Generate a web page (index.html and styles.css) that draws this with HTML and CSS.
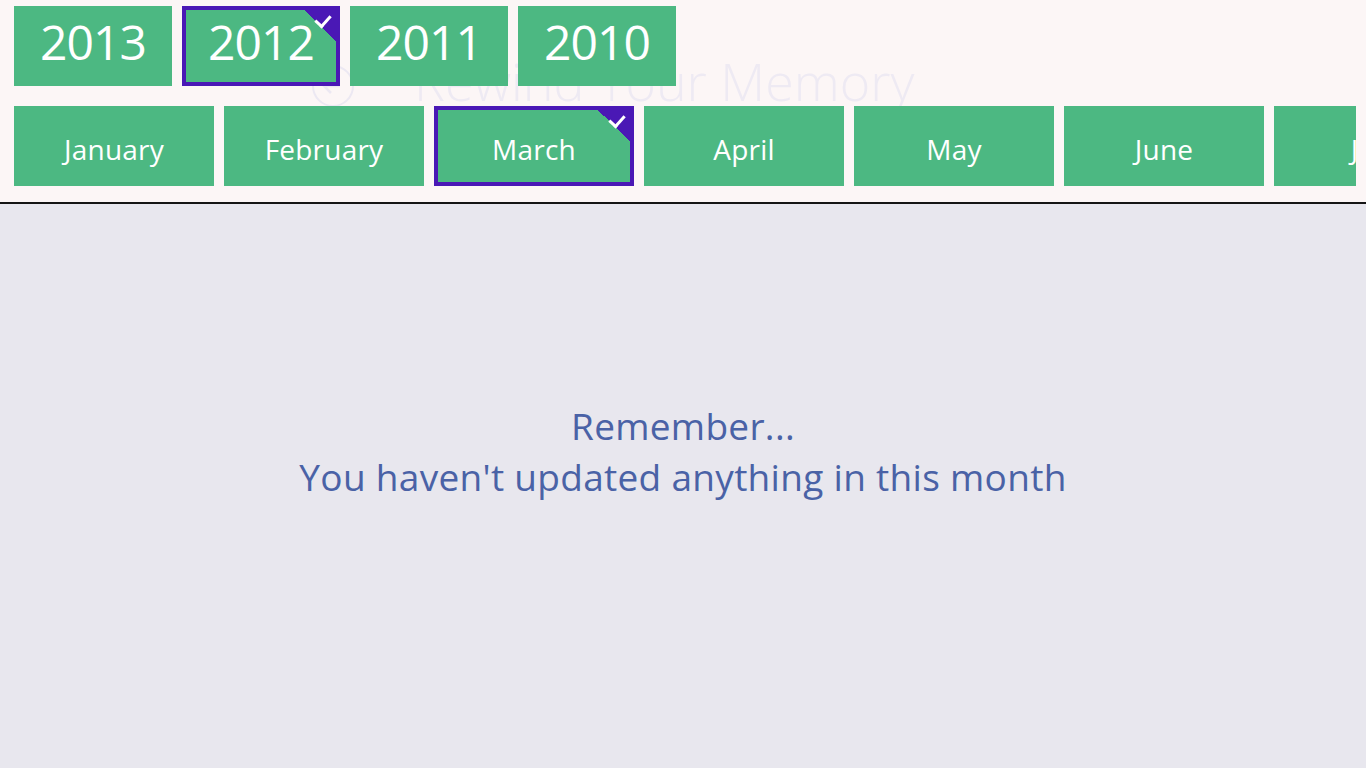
FILE: index.html
```html
<!DOCTYPE html>
<html lang="en">
<head>
<meta charset="utf-8">
<title>Rewind Your Memory</title>
<link rel="stylesheet" href="styles.css">
</head>
<body>
<header class="top">
  <div class="watermark">
    <svg class="back-icon" width="46" height="46" viewBox="0 0 46 46" aria-hidden="true">
      <circle cx="23" cy="23" r="20" fill="none" stroke="#ECE8F2" stroke-width="2"/>
      <path d="M30 23 H15 M21 16 L14 23 L21 30" fill="none" stroke="#ECE8F2" stroke-width="2.5"/>
    </svg>
    <span class="wm-title">Rewind Your Memory</span>
  </div>
  <div class="years">
    <div class="tile year">2013</div>
    <div class="tile year selected">2012</div>
    <div class="tile year">2011</div>
    <div class="tile year">2010</div>
  </div>
  <div class="months">
    <div class="tile month">January</div>
    <div class="tile month">February</div>
    <div class="tile month selected">March</div>
    <div class="tile month">April</div>
    <div class="tile month">May</div>
    <div class="tile month">June</div>
    <div class="tile month">July</div>
  </div>
</header>
<main class="empty">
  <p class="msg">Remember...<br>You haven't updated anything in this month</p>
</main>
</body>
</html>
```
FILE: styles.css
```css
* { box-sizing: border-box; }
html, body { margin: 0; padding: 0; height: 100%; }
body {
  font-family: "Open Sans", "Noto Sans", sans-serif;
  background: #E8E7EE;
  overflow: hidden;
  display: flex;
  flex-direction: column;
}
.top {
  position: relative;
  background: #FCF6F6;
  height: 204px;
  border-bottom: 2px solid #151515;
  padding: 6px 10px 0 14px;
  flex-shrink: 0;
}
.watermark {
  position: absolute;
  left: 310px;
  top: 50px;
  display: flex;
  align-items: center;
  gap: 58px;
  color: #EEEAF3;
  pointer-events: none;
}
.back-icon { margin-top: 10px; }
.wm-title {
  font-size: 52px;
  font-weight: 300;
  line-height: 62px;
  white-space: nowrap;
}
.years, .months {
  position: relative;
  display: flex;
  gap: 10px;
  height: 80px;
  overflow: hidden;
}
.months { margin-top: 20px; }
.tile {
  position: relative;
  flex-shrink: 0;
  height: 80px;
  background: #4CB882;
  color: #fff;
  display: flex;
  align-items: center;
  justify-content: center;
}
.year {
  width: 158px;
  font-size: 48px;
  letter-spacing: -1px;
  padding-bottom: 10px;
}
.month {
  width: 200px;
  font-size: 28px;
  letter-spacing: 0.2px;
  padding-top: 6px;
}
.selected {
  border: 4px solid #4A18B5;
}
.selected::after {
  content: "";
  position: absolute;
  top: 0;
  right: 0;
  width: 32px;
  height: 32px;
  background: linear-gradient(to bottom left, #4A18B5 50%, transparent 50%);
}
.selected::before {
  content: "";
  position: absolute;
  z-index: 1;
  top: 2px;
  right: 8px;
  width: 7px;
  height: 12px;
  border: solid #fff;
  border-width: 0 3px 3px 0;
  transform: rotate(42deg);
}
.empty {
  flex: 1;
  display: flex;
  justify-content: center;
  padding-top: 196px;
}
.msg {
  margin: 0;
  text-align: center;
  color: #4A62A6;
  font-size: 37px;
  line-height: 51px;
  letter-spacing: 0.3px;
}
```
